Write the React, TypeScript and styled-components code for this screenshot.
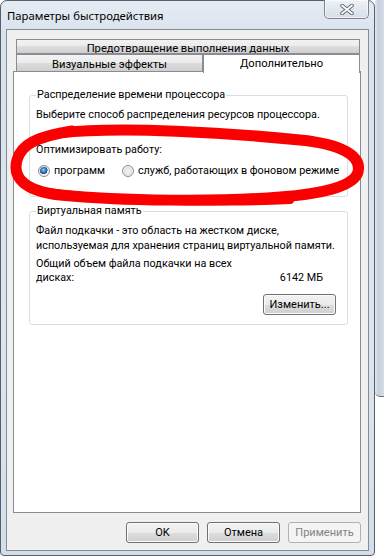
import styled, { createGlobalStyle } from "styled-components";

const GlobalStyle = createGlobalStyle`
  html, body {
    margin: 0;
    padding: 0;
    background: #ffffff;
  }
  body {
    font-family: Roboto, "Noto Sans", sans-serif;
    font-size: 10.8px;
    color: #000;
  }
`;

function CloseGlyph() {
  return (
    <svg width="14" height="11" viewBox="0 0 14 11">
      <path d="M2 1.5 L12 9.5 M12 1.5 L2 9.5" stroke="#5d6670" strokeWidth="3.6" strokeLinecap="round" />
      <path d="M2 1.5 L12 9.5 M12 1.5 L2 9.5" stroke="#ffffff" strokeWidth="1.8" strokeLinecap="round" />
    </svg>
  );
}

// красный овал, нарисованный поверх скриншота
function RedMark() {
  return (
    <MarkLayer width="384" height="559" viewBox="0 0 384 559">
      <g fill="none" stroke="#fb0000" strokeLinecap="round" strokeLinejoin="round">
        <path
          strokeWidth="11"
          d="M60 133 C120 126 230 133 300 140 C340 144 362 155 358 172 C354 187 320 194 280 197 C220 202 120 201 60 195 C25 191 12 178 17 160 C21 145 35 137 72 131"
        />
        <path strokeWidth="8" d="M40 191 C100 200 220 204 290 200" />
      </g>
    </MarkLayer>
  );
}

export default function App() {
  return (
    <>
      <GlobalStyle />
      <Desktop>
        <Window>
          <TitleBar>
            <Title>Параметры быстродействия</Title>
            <CloseButton type="button" aria-label="Закрыть">
              <CloseGlyph />
            </CloseButton>
          </TitleBar>
          <Client>
            <TabStrip>
              <TabRow $height={15}>
                <Tab $grow $line={17}>Предотвращение выполнения данных</Tab>
              </TabRow>
              <TabRow $height={18}>
                <Tab $width={187} $line={19}>Визуальные эффекты</Tab>
                <Tab $grow $selected $line={17}>Дополнительно</Tab>
              </TabRow>
            </TabStrip>
            <Panel>
              <GroupBox>
                <Legend>Распределение времени процессора</Legend>
                <Text>Выберите способ распределения ресурсов процессора.</Text>
                <Text $top={21}>Оптимизировать работу:</Text>
                <RadioRow>
                  <RadioOption>
                    <Radio $checked />
                    программ
                  </RadioOption>
                  <RadioOption>
                    <Radio />
                    служб, работающих в фоновом режиме
                  </RadioOption>
                </RadioRow>
              </GroupBox>
              <GroupBox $second>
                <Legend>Виртуальная память</Legend>
                <Para>
                  Файл подкачки - это область на жестком диске,
                  <br />
                  используемая для хранения страниц виртуальной памяти.
                </Para>
                <SizeRow>
                  <SizeLabel>
                    Общий объем файла подкачки на всех
                    <br />
                    дисках:
                  </SizeLabel>
                  <SizeValue>6142 МБ</SizeValue>
                </SizeRow>
                <ChangeRow>
                  <Button type="button" $width={73}>Изменить...</Button>
                </ChangeRow>
              </GroupBox>
            </Panel>
            <ButtonBar>
              <Button type="button">OK</Button>
              <Button type="button">Отмена</Button>
              <Button type="button" disabled>
                Применить
              </Button>
            </ButtonBar>
          </Client>
        </Window>
        <BehindWindow />
        <RedMark />
      </Desktop>
    </>
  );
}

const Desktop = styled.div`
  position: relative;
  width: 384px;
  height: 559px;
  display: flex;
  align-items: flex-start;
  overflow: hidden;
  background: #ffffff;
`;

const Window = styled.div`
  box-sizing: border-box;
  width: 375px;
  height: 556px;
  flex-shrink: 0;
  display: flex;
  flex-direction: column;
  padding: 0 5px 4px;
  border: 1px solid #56606c;
  border-radius: 7px 7px 4px 4px;
  background: linear-gradient(180deg, #e6ecf3 0%, #d9e2ec 6%, #dde5ef 60%, #d4deea 100%);
`;

const BehindWindow = styled.div`
  width: 9px;
  height: 397px;
  flex-shrink: 0;
  box-sizing: border-box;
  border-bottom: 1px solid #6a7380;
  border-bottom-left-radius: 5px;
  background: linear-gradient(90deg, #dfe7f1 0%, #c6d0dc 40%, #d6dee8 100%);
`;

const TitleBar = styled.div`
  height: 28px;
  display: flex;
  justify-content: space-between;
  align-items: flex-start;
`;

const Title = styled.div`
  margin: 7px 0 0 1px;
  line-height: 16px;
  font-family: "Noto Sans", sans-serif;
  font-size: 11.3px;
  color: #000;
`;

const CloseButton = styled.button`
  box-sizing: border-box;
  width: 45px;
  height: 19px;
  margin: -1px 0 0;
  padding: 0;
  display: grid;
  place-items: center;
  border: 1px solid #7c8591;
  border-top: none;
  border-radius: 0 0 5px 5px;
  background: linear-gradient(180deg, #eef2f6 0%, #e2e8ef 50%, #d6dee7 100%);
  box-shadow: inset 0 0 0 1px rgba(255, 255, 255, 0.6);
`;

const Client = styled.div`
  flex: 1;
  display: flex;
  flex-direction: column;
  padding: 9px 7px 7px 6px;
  border: 1px solid #848c96;
  background: #f0f0f0;
`;

const TabStrip = styled.div`
  position: relative;
  z-index: 1;
  display: flex;
  flex-direction: column;
  margin-left: 3px;
`;

const TabRow = styled.div<{ $height: number }>`
  display: flex;
  height: ${({ $height }) => $height}px;
`;

const Tab = styled.div<{ $grow?: boolean; $width?: number; $selected?: boolean; $line: number }>`
  box-sizing: border-box;
  ${({ $grow, $width }) => ($grow ? "flex: 1;" : `width: ${$width}px;`)}
  height: ${({ $selected }) => ($selected ? "calc(100% + 1px)" : "100%")};
  overflow: hidden;
  text-align: center;
  font-size: 11.2px;
  line-height: ${({ $line }) => $line}px;
  white-space: nowrap;
  border: 1px solid #898c95;
  border-bottom: ${({ $selected }) => ($selected ? "none" : "1px solid #898c95")};
  margin-left: ${({ $selected }) => ($selected ? "-1px" : "0")};
  margin-right: 1px;
  background: ${({ $selected }) =>
    $selected
      ? "#ffffff"
      : "linear-gradient(180deg, #f2f2f2 0%, #ebebeb 50%, #dddddd 50%, #cfcfcf 100%)"};
`;

const Panel = styled.div`
  flex: 1;
  margin-top: -1px;
  padding: 16px 12px 0 15px;
  border: 1px solid #898c95;
  background: #ffffff;
`;

const GroupBox = styled.fieldset<{ $second?: boolean }>`
  margin: ${({ $second }) => ($second ? "7px" : "0")} 0 0;
  padding: ${({ $second }) => ($second ? "5px 11px 9px 6px" : "6px 4px 18px 6px")};
  border: 1px solid #d5dfe5;
  border-radius: 3px;
  min-width: 0;
  white-space: nowrap;
`;

const Legend = styled.legend`
  padding: 0 1px;
  line-height: 14px;
`;

const Text = styled.div<{ $top?: number }>`
  margin-top: ${({ $top }) => $top ?? 0}px;
  line-height: 14px;
`;

const RadioRow = styled.div`
  display: flex;
  align-items: center;
  gap: 17px;
  margin-top: 7px;
  padding-left: 2px;
  line-height: 14px;
`;

const RadioOption = styled.label`
  display: inline-flex;
  align-items: center;
  gap: 4px;
`;

const Radio = styled.span<{ $checked?: boolean }>`
  box-sizing: border-box;
  width: 12px;
  height: 12px;
  border-radius: 50%;
  border: 1px solid #8e8f8f;
  background: ${({ $checked }) =>
    $checked
      ? "radial-gradient(circle at 45% 40%, #9fd0f5 0%, #3f85c9 25%, #1c4f8c 48%, #f4f4f4 52%, #e6e6e6 100%)"
      : "radial-gradient(circle at 50% 50%, #f6f6f6 0%, #e2e2e2 55%, #d4d4d4 100%)"};
  box-shadow: inset 0 0 0 1px #f4f4f4;
`;

const Para = styled.div`
  line-height: 15px;
`;

const SizeRow = styled.div`
  display: flex;
  justify-content: space-between;
  align-items: flex-end;
  margin-top: 4px;
  line-height: 14px;
`;

const SizeLabel = styled.div``;

const SizeValue = styled.div`
  padding-right: 13px;
`;

const ChangeRow = styled.div`
  display: flex;
  justify-content: flex-end;
  margin-top: 9px;
`;

const Button = styled.button<{ $width?: number }>`
  box-sizing: border-box;
  width: ${({ $width }) => $width ?? 73}px;
  height: 21px;
  padding: 0;
  font-family: Roboto, "Noto Sans", sans-serif;
  font-size: 11px;
  color: #000;
  border: 1px solid #707070;
  border-radius: 3px;
  background: linear-gradient(180deg, #f2f2f2 0%, #ebebeb 50%, #dddddd 50%, #cfcfcf 100%);
  box-shadow: inset 0 0 0 1px #fcfcfc;

  &:disabled {
    color: #838383;
    border-color: #adb2b5;
    background: #f4f4f4;
    box-shadow: none;
  }
`;

const ButtonBar = styled.div`
  display: flex;
  justify-content: flex-end;
  gap: 8px;
  margin-top: 9px;
`;

const MarkLayer = styled.svg`
  position: absolute;
  left: 0;
  top: 0;
  pointer-events: none;
`;
